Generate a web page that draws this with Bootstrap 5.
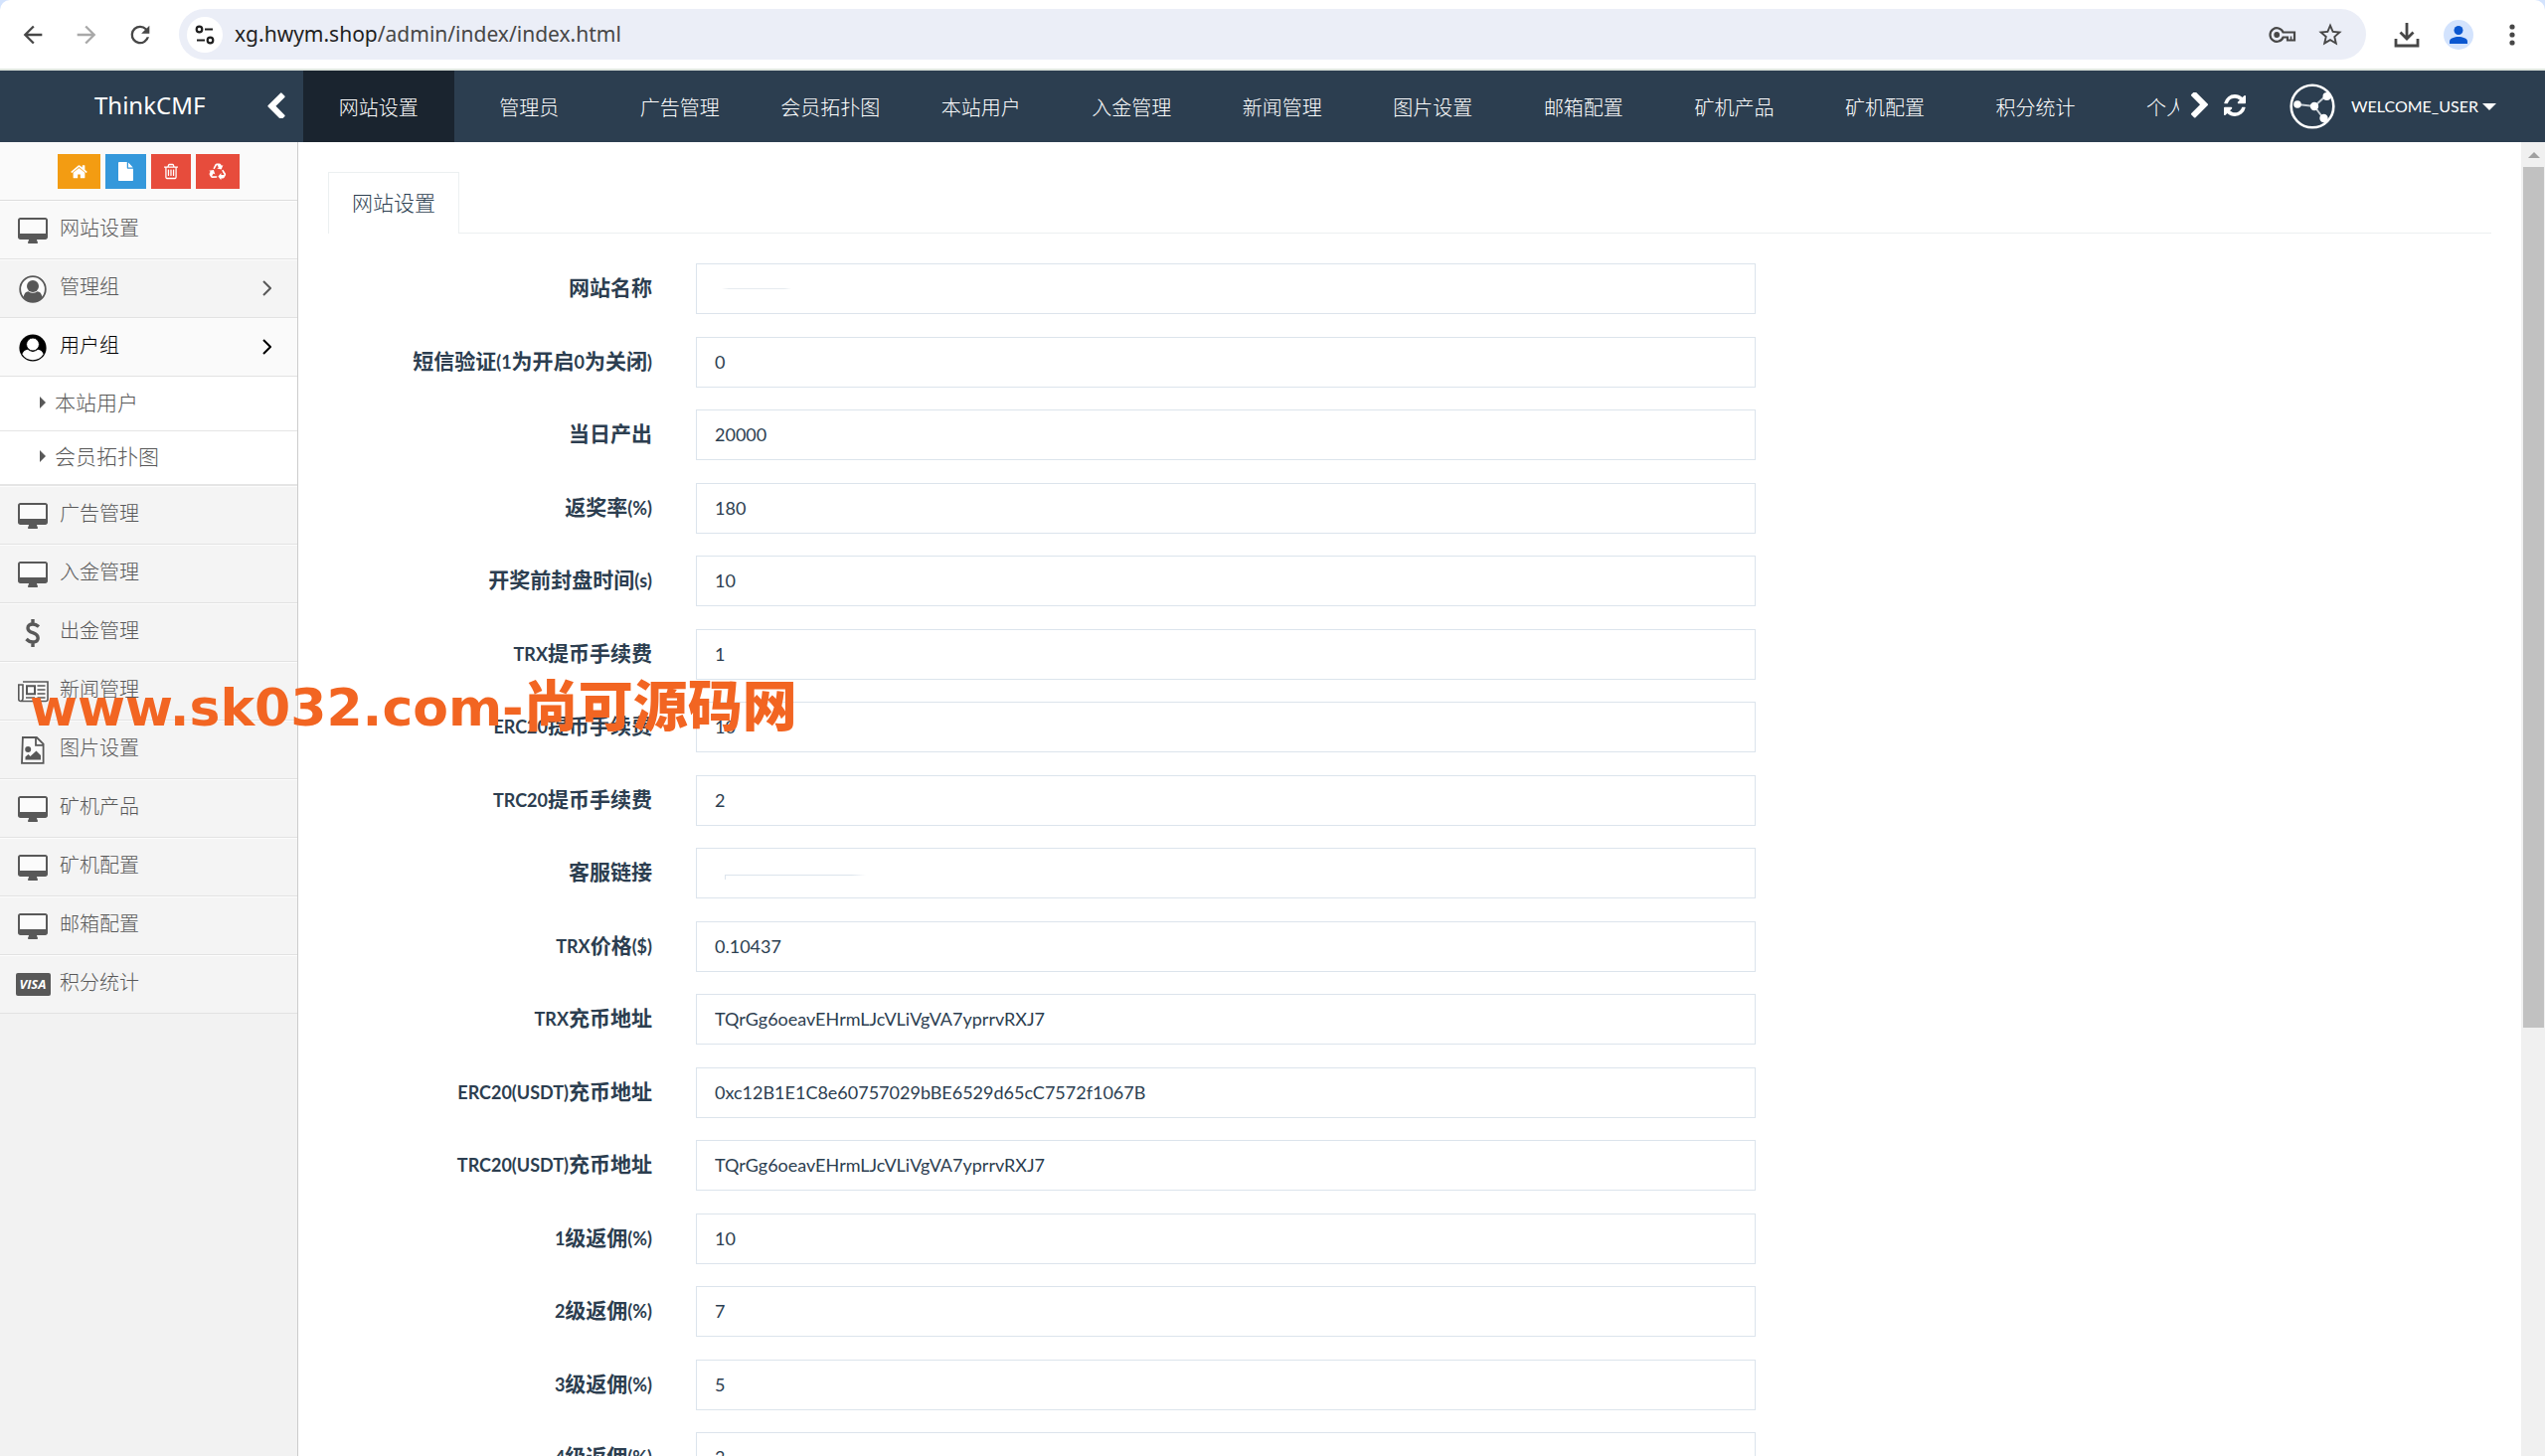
<!DOCTYPE html>
<html lang="zh-CN">
<head>
<meta charset="utf-8">
<meta name="viewport" content="width=device-width, initial-scale=1">
<title>ThinkCMF</title>
<link rel="stylesheet" href="https://cdn.jsdelivr.net/npm/bootstrap@5.3.0/dist/css/bootstrap.min.css">
<style>
body{font-family:Lato,"Noto Sans CJK SC",sans-serif;font-size:20px;line-height:30px;color:#2c3e50;background:#fff}
svg{display:block;flex:none;fill:currentColor}
svg.outline{fill:none;stroke:currentColor}
button{border:0;background:none;padding:0;color:inherit}
a{color:inherit;text-decoration:none}
/* browser bar */
.chrome-frame{background:#d3e3fd}
.chrome-bar{height:71px;background:#fff;border-radius:10px 10px 0 0;border-bottom:2px solid #dfe6df;padding:0 30px 0 9px;color:#474747}
.nav-tools{width:171px;padding-left:10px;gap:26px}
.nav-tools button:disabled{color:#a8a8a8}
.omnibox{height:51px;border-radius:26px;background:#ebeef7;padding:0 22px 0 8px}
.site-info{width:36px;height:36px;border-radius:50%;background:#fff;color:#1f1f1f}
.url-field{font-family:"Noto Sans",sans-serif;font-size:21px;line-height:28px;padding:0 12px 2px;color:#474747}
.url-field b{font-weight:400;color:#1f1f1f}
.profile-dot{width:30px;height:30px;border-radius:50%;background:#d3e3fd;color:#0b57d0}
/* top navigation */
.topbar{height:72px;background:#2c3e50;color:#fff}
.brand-box{width:305px;padding:0 18px 2px 95px}
.brand-name{font-family:"Noto Sans",sans-serif;font-size:24px}
.flip{transform:rotate(180deg)}
.top-tabs a{flex:0 0 8.03%;height:72px;line-height:74px;white-space:nowrap;text-align:center;font-weight:300}
.top-tabs a.current{background:#1a242f}
.top-user{width:368px;padding-left:8px}
.top-user button{margin-bottom:2px}
.user-name{font-size:16px;margin-left:44px}
.caret-down{border:7px solid transparent;border-top-color:#fff;border-bottom:0}
/* sidebar */
.sidebar{width:300px;background:#f2f2f2;border-right:1px solid #ccc;color:#585858;font-weight:300}
.shortcuts{height:59px;background:#fafafa;border-bottom:1px solid #ddd;padding:12px 0 0 58px;gap:5px}
.shortcuts button{height:35px;color:#fff;padding:0 13px}
.btn-home{background:#f39c12!important}
.btn-file{background:#3498db!important}
.btn-red{background:#e74c3c!important}
.menu-link{height:59px;background:#f4f4f4;border-bottom:1px solid #e2e2e2;border-top:1px solid #fcfcfc;padding:0 26px 6px 14px}
.menu-link.pale{background:#f9f9f9}
.menu-link.opened{background:#fafafa;color:#000}
.menu-icon{width:38px;height:34px;margin-right:8px}
.menu-icon svg{margin-top:6px}
.menu-link > svg{margin-top:4px}
.submenu{background:#fff;border-bottom:2px solid #e5e5e5}
.submenu a{height:54px;font-size:21px;padding:0 0 3px 40px;gap:9px}
.submenu a + a{border-top:1px solid #e5e5e5}
.caret-side{border:6px solid transparent;border-left-color:#585858;border-right:0}
/* content */
.content-pane{padding:30px 30px 0 30px}
.page-tabs{height:62px;border-bottom:1px solid #ecf0f1}
.page-tabs a{height:62px;border:1px solid #ecf0f1;border-bottom:0;background:#fff;padding:0 23px;font-size:21px;line-height:59px;font-weight:300}
.settings-form{padding-top:30px}
.form-line{--bs-gutter-x:44px;height:51px;margin-bottom:23px}
.form-line:nth-child(even){margin-bottom:22px}
.form-line label{font-size:21px;font-weight:700;line-height:48px;text-align:right;white-space:nowrap}
.form-line label i{font-style:normal;font-size:18px}
.form-line .form-control{height:51px;border:1px solid #dce4ec;border-radius:0;padding:0 18px 2px;font-size:18px;color:#2c3e50}
.form-control.erased-a{background:linear-gradient(90deg,transparent,#e6ebef 10%,#e6ebef 90%,transparent) 25px 24px/70px 1px no-repeat #fff}
.form-control.erased-b{background:linear-gradient(90deg,#dce4ec 90%,transparent) 28px 26px/142px 1px no-repeat,linear-gradient(#dce4ec,#dce4ec) 28px 26px/1px 5px no-repeat #fff}
.scroll-rail{width:24px;background:#f0f0f0;padding:10px 1px 0 2px}
.scroll-up{border:6px solid transparent;border-bottom-color:#a0a0a0;border-top:0;margin:0 auto 9px}
.scroll-grip{height:66%;background:#c1c1c1}
.stamp{position:absolute;left:30px;top:668px;z-index:5;color:#f26522;font:700 52px/76px "DejaVu Sans",sans-serif;white-space:nowrap;pointer-events:none}
.stamp span{font:900 55px/76px "Noto Sans CJK SC",sans-serif}
</style>
<script src="https://cdn.jsdelivr.net/npm/bootstrap@5.3.0/dist/js/bootstrap.bundle.min.js"></script>
</head>
<body class="vh-100 d-flex flex-column overflow-hidden position-relative">
<svg width="0" height="0" class="d-none">
  <symbol id="i-desktop" viewBox="-64 0 1920 1664"><path d="M1728 992v-832q0-13-9.500-22.500t-22.500-9.500h-1600q-13 0-22.500 9.500t-9.500 22.500v832q0 13 9.500 22.500t22.500 9.500h1600q13 0 22.500-9.500t9.500-22.500zm128-832v1088q0 66-47 113t-113 47h-544q0 37 16 77.500t32 71 16 43.500q0 26-19 45t-45 19h-512q-26 0-45-19t-19-45q0-14 16-44t32-70 16-78h-544q-66 0-113-47t-47-113v-1088q0-66 47-113t113-47h1600q66 0 113 47t47 113z"/><path fill="#fbfbfb" d="M64 128h1664v896h-1664z"/></symbol>
  <symbol id="i-chev" viewBox="346 100 1036 1560"><path d="M1363 877l-742 742q-19 19-45 19t-45-19l-166-166q-19-19-19-45t19-45l531-531-531-531q-19-19-19-45t19-45l166-166q19-19 45-19t45 19l742 742q19 19 19 45t-19 45z"/></symbol>
</svg>

<header class="chrome-frame">
  <div class="chrome-bar d-flex align-items-center">
    <div class="nav-tools d-flex align-items-center">
      <button aria-label="后退"><svg width="28" height="28" viewBox="0 0 24 24"><path d="M20 11H7.800l5.600-5.600L12 4l-8 8 8 8 1.400-1.400L7.800 13H20z"/></svg></button>
      <button aria-label="前进" disabled><svg width="28" height="28" viewBox="0 0 24 24"><path d="M4 11h12.200l-5.600-5.600L12 4l8 8-8 8-1.400-1.400L16.200 13H4z"/></svg></button>
      <button aria-label="重新加载"><svg width="28" height="28" viewBox="0 0 24 24"><path d="M17.650 6.350A7.960 7.960 0 0 0 12 4a8 8 0 1 0 7.730 10h-2.080A6 6 0 1 1 12 6c1.660 0 3.140.69 4.220 1.780L13 11h7V4z"/></svg></button>
    </div>
    <div class="omnibox d-flex align-items-center flex-grow-1">
      <button class="site-info d-flex align-items-center justify-content-center" aria-label="网站信息"><svg class="outline" width="20" height="20" viewBox="0 0 20 20" stroke-width="2.200"><circle cx="4.500" cy="4.500" r="2.800"/><path d="M10 4.500h8M2 15.500h8"/><circle cx="15.500" cy="15.500" r="2.800"/></svg></button>
      <div class="url-field flex-grow-1"><b>xg.hwym.shop</b>/admin/index/index.html</div>
      <button aria-label="密码"><svg class="outline" width="28" height="18" viewBox="0 0 28 18" stroke-width="2.200"><path d="M14.600 6.500A6.800 6.800 0 1 0 14.600 11.500H19v3h7v-8z"/><circle cx="8.200" cy="9" r="2.900" fill="currentColor" stroke="none"/><path d="M22.500 14.500v-4" stroke-width="1.500"/></svg></button>
      <button class="ms-3 ps-1" aria-label="收藏"><svg width="28" height="28" viewBox="0 0 24 24"><path d="M22 9.240l-7.190-.62L12 2 9.190 8.630 2 9.240l5.460 4.730L5.820 21 12 17.270 18.180 21l-1.630-7.030L22 9.240zM12 15.400l-3.760 2.270 1-4.280-3.320-2.880 4.380-.38L12 6.100l1.710 4.040 4.380.38-3.320 2.880 1 4.280L12 15.400z"/></svg></button>
    </div>
    <div class="d-flex align-items-center ms-4 ps-1">
      <button aria-label="下载"><svg class="outline" width="26" height="26" viewBox="0 0 26 26" stroke-width="2.800"><path d="M13 1v15M6.500 10.500l6.500 6.500 6.500-6.500M2 17v7h22v-7"/></svg></button>
      <button class="profile-dot d-flex align-items-center justify-content-center ms-4 me-3" aria-label="个人资料"><svg width="18" height="18" viewBox="0 0 18 18"><circle cx="9" cy="4.500" r="4.500"/><path d="M0 18v-2.500C0 12.500 5 11 9 11s9 1.500 9 4.500V18z"/></svg></button>
      <button class="ms-3 ps-1" aria-label="菜单"><svg width="6" height="22" viewBox="0 0 6 22"><circle cx="3" cy="3" r="2.600"/><circle cx="3" cy="11" r="2.600"/><circle cx="3" cy="19" r="2.600"/></svg></button>
    </div>
  </div>
</header>

<nav class="topbar d-flex flex-shrink-0">
  <div class="brand-box d-flex align-items-center justify-content-between">
    <a class="brand-name" href="#">ThinkCMF</a>
    <button class="flip" aria-label="向左"><svg width="18" height="26"><use href="#i-chev"/></svg></button>
  </div>
  <div class="top-tabs d-flex flex-grow-1 overflow-hidden">
    <a class="current" href="#">网站设置</a><a href="#">管理员</a><a href="#">广告管理</a><a href="#">会员拓扑图</a><a href="#">本站用户</a><a href="#">入金管理</a><a href="#">新闻管理</a><a href="#">图片设置</a><a href="#">邮箱配置</a><a href="#">矿机产品</a><a href="#">矿机配置</a><a href="#">积分统计</a><a href="#">个人中心</a>
  </div>
  <div class="top-user d-flex align-items-center flex-shrink-0">
    <button class="ms-1" aria-label="向右"><svg width="17" height="26"><use href="#i-chev"/></svg></button>
    <button class="ms-3" aria-label="刷新"><svg width="22" height="22" viewBox="128 128 1536 1536"><path d="M1639 1056q0 5-1 7-64 268-268 434.500t-478 166.500q-146 0-282.500-55t-243.500-157l-129 129q-19 19-45 19t-45-19-19-45v-448q0-26 19-45t45-19h448q26 0 45 19t19 45-19 45l-137 137q71 66 161 102t187 36q134 0 250-65t186-179q11-17 53-117 8-23 30-23h192q13 0 22.500 9.500t9.500 22.500zm25-800v448q0 26-19 45t-45 19h-448q-26 0-45-19t-19-45 19-45l138-138q-148-137-349-137-134 0-250 65t-186 179q-11 17-53 117-8 23-30 23h-199q-13 0-22.500-9.500t-9.500-22.500v-7q65-268 270-434.500t480-166.500q146 0 284 55.500t245 156.500l130-129q19-19 45-19t45 19 19 45z"/></svg></button>
    <a class="d-flex align-items-center user-name" href="#"><svg class="me-3" width="46" height="46" viewBox="0 0 46 46"><circle cx="23" cy="23" r="21.300" fill="none" stroke="#fff" stroke-width="2.600"/><path d="M8 21l17 2 12-11M25 23l9 12" fill="none" stroke="#c9d0d6" stroke-width="2"/><circle cx="8" cy="21" r="3.800"/><circle cx="25" cy="23" r="4.200"/><circle cx="37.500" cy="13" r="4"/><circle cx="34.500" cy="35" r="4.200"/></svg>WELCOME_USER<span class="caret-down ms-1"></span></a>
  </div>
</nav>

<div class="d-flex flex-grow-1 overflow-hidden">
  <aside class="sidebar flex-shrink-0">
    <div class="shortcuts d-flex">
      <button class="btn-home" aria-label="首页"><svg width="17" height="17" viewBox="64 128 1664 1472"><path d="M1472 992v480q0 26-19 45t-45 19h-384v-384h-256v384h-384q-26 0-45-19t-19-45v-480q0-1 .5-3t.5-3l575-474 575 474q1 2 1 6zm223-69l-62 74q-8 9-21 11h-3q-13 0-21-7l-692-577-692 577q-12 8-24 7-13-2-21-11l-62-74q-8-10-7-23.500t11-21.500l719-599q32-26 76-26t76 26l244 204v-195q0-14 9-23t23-9h192q14 0 23 9t9 23v408l219 182q10 8 11 21.500t-7 23.500z"/></svg></button>
      <button class="btn-file" aria-label="文件"><svg width="15" height="19" viewBox="128 0 1536 1792" preserveAspectRatio="none"><path d="M1152 512v-472q22 14 36 28l408 408q14 14 28 36h-472zm-128 32q0 40 28 68t68 28h544v1056q0 40-28 68t-68 28h-1344q-40 0-68-28t-28-68v-1600q0-40 28-68t68-28h800v544z"/></svg></button>
      <button class="btn-red" aria-label="删除"><svg width="14" height="17" viewBox="192 128 1408 1536"><path d="M704 736v576q0 14-9 23t-23 9h-64q-14 0-23-9t-9-23v-576q0-14 9-23t23-9h64q14 0 23 9t9 23zm256 0v576q0 14-9 23t-23 9h-64q-14 0-23-9t-9-23v-576q0-14 9-23t23-9h64q14 0 23 9t9 23zm256 0v576q0 14-9 23t-23 9h-64q-14 0-23-9t-9-23v-576q0-14 9-23t23-9h64q14 0 23 9t9 23zm128 724v-948h-896v948q0 22 7 40.500t14.500 27 10.500 8.500h832q3 0 10.500-8.500t14.500-27 7-40.500zm-672-1076h448l-48-117q-7-9-17-11h-317q-10 2-17 11zm928 32v64q0 14-9 23t-23 9h-96v948q0 83-47 143.500t-113 60.500h-832q-66 0-113-58.500t-47-141.500v-952h-96q-14 0-23-9t-9-23v-64q0-14 9-23t23-9h309l70-167q15-37 54-63t79-26h320q40 0 79 26t54 63l70 167h309q14 0 23 9t9 23z"/></svg></button>
      <button class="btn-red" aria-label="清除缓存"><svg width="18" height="18" viewBox="-9 -9 18 18"><g id="rc"><path d="M-4.600-3.600L-2.600-7.600Q-2-8.600-.8-8.600H1.500Q2.600-8.600 3.200-7.500L3.900-6.200 5.400-7 3.700-2.600-.8-3.500.9-4.500-.7-7.200-3.300-2.800z"/></g><use href="#rc" transform="rotate(120)"/><use href="#rc" transform="rotate(240)"/></svg></button>
    </div>
    <a class="menu-link pale d-flex align-items-center" href="#"><span class="menu-icon d-flex align-items-center justify-content-center"><svg width="30" height="26"><use href="#i-desktop"/></svg></span>网站设置</a>
    <a class="menu-link d-flex align-items-center" href="#"><span class="menu-icon d-flex align-items-center justify-content-center"><svg width="28" height="28" viewBox="0 0 28 28"><circle cx="14" cy="14" r="12.800" fill="#fbfbfb" stroke="currentColor" stroke-width="1.800"/><circle cx="14" cy="11" r="6"/><path d="M4.500 22Q5.500 16.500 9.500 16.200 14 19.500 18.500 16.200 22.500 16.500 23.500 22 19.500 27 14 27T4.500 22z"/></svg></span><span class="flex-grow-1">管理组</span><svg class="outline" width="9" height="16" viewBox="0 0 9 16" stroke-width="2"><path d="M1 1l7 7-7 7"/></svg></a>
    <a class="menu-link opened d-flex align-items-center" href="#"><span class="menu-icon d-flex align-items-center justify-content-center"><svg width="28" height="28" viewBox="0 0 28 28"><circle cx="14" cy="14" r="13.600"/><path fill="#fff" d="M3.300 20.300Q5 16.200 8.800 15.800 14 20 19.200 15.800 23 16.200 24.700 20.300 21 26.200 14 26.200T3.300 20.300z"/><circle cx="14" cy="10.500" r="6.400" fill="#fff" stroke="#000" stroke-width=".8"/></svg></span><span class="flex-grow-1">用户组</span><svg class="outline" width="9" height="16" viewBox="0 0 9 16" stroke-width="2"><path d="M1 1l7 7-7 7"/></svg></a>
    <div class="submenu">
      <a class="d-flex align-items-center" href="#"><span class="caret-side"></span>本站用户</a>
      <a class="d-flex align-items-center" href="#"><span class="caret-side"></span>会员拓扑图</a>
    </div>
    <a class="menu-link d-flex align-items-center" href="#"><span class="menu-icon d-flex align-items-center justify-content-center"><svg width="30" height="26"><use href="#i-desktop"/></svg></span>广告管理</a>
    <a class="menu-link d-flex align-items-center" href="#"><span class="menu-icon d-flex align-items-center justify-content-center"><svg width="30" height="26"><use href="#i-desktop"/></svg></span>入金管理</a>
    <a class="menu-link d-flex align-items-center" href="#"><span class="menu-icon d-flex align-items-center justify-content-center"><svg class="outline" width="16" height="28" viewBox="0 0 16 28" stroke-width="3.400"><path d="M14 7.500Q11 5 8 5 3 5 3 9 3 12 8 13.700T13.200 19Q13.200 23 8 23 4.500 23 1.500 20M8 0v5M8 23v5"/></svg></span>出金管理</a>
    <a class="menu-link d-flex align-items-center" href="#"><span class="menu-icon d-flex align-items-center justify-content-center"><svg class="outline" width="31" height="22" viewBox="0 0 31 22" stroke-width="1.600"><path fill="#fbfbfb" d="M5 1h25v17.500q0 2-2 2H3q-2.200 0-2.200-2V4H5v14q0 2-2 2.500"/><path d="M9 5.300h8v8H9z" stroke-width="2"/><path d="M19.500 5h8M19.500 9h8M19.500 13h8M8 17h9M19.500 17h8"/></svg></span>新闻管理</a>
    <a class="menu-link d-flex align-items-center" href="#"><span class="menu-icon d-flex align-items-center justify-content-center"><svg width="24" height="28" viewBox="0 0 24 28"><path d="M1.900 1h14L22.600 7.700V26.800H1z" fill="#fbfbfb" stroke="currentColor" stroke-width="1.800"/><path d="M15 1.500v7.300h7.500" fill="none" stroke="currentColor" stroke-width="1.800"/><circle cx="7.200" cy="13" r="3"/><path d="M4.500 23.500v-3L7.500 18l2 2 6-5.500 4.500 4.500v4.500z"/></svg></span>图片设置</a>
    <a class="menu-link d-flex align-items-center" href="#"><span class="menu-icon d-flex align-items-center justify-content-center"><svg width="30" height="26"><use href="#i-desktop"/></svg></span>矿机产品</a>
    <a class="menu-link d-flex align-items-center" href="#"><span class="menu-icon d-flex align-items-center justify-content-center"><svg width="30" height="26"><use href="#i-desktop"/></svg></span>矿机配置</a>
    <a class="menu-link d-flex align-items-center" href="#"><span class="menu-icon d-flex align-items-center justify-content-center"><svg width="30" height="26"><use href="#i-desktop"/></svg></span>邮箱配置</a>
    <a class="menu-link d-flex align-items-center" href="#"><span class="menu-icon d-flex align-items-center justify-content-center"><svg width="35" height="23" viewBox="0 0 35 23"><rect width="35" height="23" rx="2"/><text x="17" y="16" text-anchor="middle" font-family="Open Sans, sans-serif" font-style="italic" font-weight="700" font-size="13" fill="#fff">VISA</text></svg></span>积分统计</a>
  </aside>

  <main class="content-pane flex-grow-1">
    <div class="page-tabs"><a class="d-inline-block" href="#">网站设置</a></div>
    <form class="settings-form">
      <div class="row form-line"><label class="col-2" for="f1">网站名称</label><div class="col-6"><input class="form-control erased-a" id="f1" type="text"></div></div>
      <div class="row form-line"><label class="col-2" for="f2">短信验证<i>(1</i>为开启<i>0</i>为关闭<i>)</i></label><div class="col-6"><input class="form-control" id="f2" type="text" value="0"></div></div>
      <div class="row form-line"><label class="col-2" for="f3">当日产出</label><div class="col-6"><input class="form-control" id="f3" type="text" value="20000"></div></div>
      <div class="row form-line"><label class="col-2" for="f4">返奖率<i>(%)</i></label><div class="col-6"><input class="form-control" id="f4" type="text" value="180"></div></div>
      <div class="row form-line"><label class="col-2" for="f5">开奖前封盘时间<i>(s)</i></label><div class="col-6"><input class="form-control" id="f5" type="text" value="10"></div></div>
      <div class="row form-line"><label class="col-2" for="f6"><i>TRX</i>提币手续费</label><div class="col-6"><input class="form-control" id="f6" type="text" value="1"></div></div>
      <div class="row form-line"><label class="col-2" for="f7"><i>ERC20</i>提币手续费</label><div class="col-6"><input class="form-control" id="f7" type="text" value="10"></div></div>
      <div class="row form-line"><label class="col-2" for="f8"><i>TRC20</i>提币手续费</label><div class="col-6"><input class="form-control" id="f8" type="text" value="2"></div></div>
      <div class="row form-line"><label class="col-2" for="f9">客服链接</label><div class="col-6"><input class="form-control erased-b" id="f9" type="text"></div></div>
      <div class="row form-line"><label class="col-2" for="f10"><i>TRX</i>价格<i>($)</i></label><div class="col-6"><input class="form-control" id="f10" type="text" value="0.10437"></div></div>
      <div class="row form-line"><label class="col-2" for="f11"><i>TRX</i>充币地址</label><div class="col-6"><input class="form-control" id="f11" type="text" value="TQrGg6oeavEHrmLJcVLiVgVA7yprrvRXJ7"></div></div>
      <div class="row form-line"><label class="col-2" for="f12"><i>ERC20(USDT)</i>充币地址</label><div class="col-6"><input class="form-control" id="f12" type="text" value="0xc12B1E1C8e60757029bBE6529d65cC7572f1067B"></div></div>
      <div class="row form-line"><label class="col-2" for="f13"><i>TRC20(USDT)</i>充币地址</label><div class="col-6"><input class="form-control" id="f13" type="text" value="TQrGg6oeavEHrmLJcVLiVgVA7yprrvRXJ7"></div></div>
      <div class="row form-line"><label class="col-2" for="f14"><i>1</i>级返佣<i>(%)</i></label><div class="col-6"><input class="form-control" id="f14" type="text" value="10"></div></div>
      <div class="row form-line"><label class="col-2" for="f15"><i>2</i>级返佣<i>(%)</i></label><div class="col-6"><input class="form-control" id="f15" type="text" value="7"></div></div>
      <div class="row form-line"><label class="col-2" for="f16"><i>3</i>级返佣<i>(%)</i></label><div class="col-6"><input class="form-control" id="f16" type="text" value="5"></div></div>
      <div class="row form-line"><label class="col-2" for="f17"><i>4</i>级返佣<i>(%)</i></label><div class="col-6"><input class="form-control" id="f17" type="text" value="3"></div></div>
    </form>
  </main>
  <div class="scroll-rail flex-shrink-0 d-flex flex-column" aria-hidden="true">
    <div class="scroll-up"></div>
    <div class="scroll-grip"></div>
  </div>
</div>
<div class="stamp">www.sk032.com-<span>尚可源码网</span></div>
</body>
</html>
